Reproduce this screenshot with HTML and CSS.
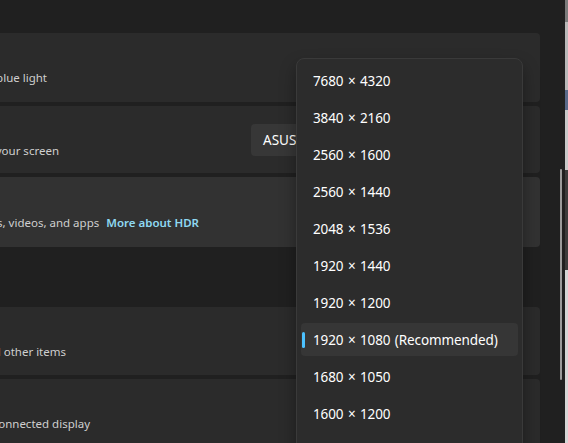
FILE: index.html
```html
<!DOCTYPE html>
<html lang="en">

<head>
    <meta charset="UTF-8">
    <meta name="viewport" content="width=device-width, initial-scale=1.0">
    <title>Display</title>
    <link rel="stylesheet" href="styles.css">
</head>

<body>
    <div class="window">
        <div class="content">
            <div class="card card-night">
                <div class="desc desc-night">
                    <span>Use warmer colors to help block blue light</span>
                </div>
                <div class="toggle"></div>
            </div>
            <div class="card card-color">
                <div class="desc desc-color">
                    <span>Adjust the way colors appear on your screen</span>
                </div>
                <div class="select">ASUS VG27A</div>
            </div>
            <div class="card card-hdr hover">
                <div class="desc desc-hdr">
                    <span>Get a brighter and more vibrant picture in games, videos, and apps</span>
                    <a class="link">More about HDR</a>
                </div>
            </div>
            <div class="section-gap"></div>
            <div class="card card-scale">
                <div class="desc desc-scale">
                    <span>Change the size of text, apps, and other items</span>
                </div>
            </div>
            <div class="card card-res">
                <div class="desc desc-res">
                    <span>Adjust the resolution to fit your connected display</span>
                </div>
            </div>
        </div>
        <div class="gutter">
            <div class="scrollbar"></div>
        </div>
        <div class="edge"></div>
    </div>

    <div class="dropdown">
        <ul>
            <li>7680 × 4320</li>
            <li>3840 × 2160</li>
            <li>2560 × 1600</li>
            <li>2560 × 1440</li>
            <li>2048 × 1536</li>
            <li>1920 × 1440</li>
            <li>1920 × 1200</li>
            <li class="selected">1920 × 1080 (Recommended)</li>
            <li>1680 × 1050</li>
            <li>1600 × 1200</li>
            <li>1600 × 900</li>
        </ul>
    </div>
</body>

</html>
```

FILE: styles.css
```css
html,
body {
    margin: 0;
    height: 100%;
    overflow: hidden;
}

body {
    background-color: #202020;
    font-family: "Noto Sans", "Open Sans", sans-serif;
    color: #ffffff;
    position: relative;
}

.window {
    display: flex;
    height: 100%;
}

.content {
    width: 540px;
    padding-top: 33px;
    display: flex;
    flex-direction: column;
    gap: 4px;
    overflow: hidden;
}

.card {
    flex: none;
    display: flex;
    align-items: center;
    margin-left: -10px;
    background-color: #2b2b2b;
    border-radius: 4px;
}

.card.hover {
    background-color: #323232;
}

.card-night {
    height: 69px;
}

.card-color {
    height: 67px;
}

.card-hdr {
    height: 70px;
}

.section-gap {
    flex: none;
    height: 52px;
}

.card-scale {
    height: 68px;
}

.card-res {
    height: 80px;
}

.desc {
    align-self: flex-start;
    margin-top: 37px;
    display: flex;
    justify-content: flex-end;
    align-items: center;
    white-space: nowrap;
    font-size: 11.5px;
    line-height: 16px;
    color: #cfcfcf;
}

.desc-night {
    width: 57px;
}

.desc-color {
    width: 69px;
}

.desc-hdr {
    width: 209px;
    margin-top: 38px;
}

.desc-scale {
    width: 76px;
}

.desc-res {
    width: 100px;
}

.link {
    margin-left: 7px;
    color: #8fd9f2;
    font-weight: 600;
}

.toggle {
    margin-left: auto;
    margin-right: 44px;
    width: 38px;
    height: 18px;
    border: 1px solid #9d9d9d;
    border-radius: 10px;
}

.select {
    margin-left: auto;
    margin-right: 20px;
    width: 269px;
    height: 32px;
    padding-left: 12px;
    box-sizing: border-box;
    display: flex;
    align-items: center;
    background-color: #373737;
    border-radius: 4px;
    font-size: 13.5px;
}

.gutter {
    width: 25px;
}

.scrollbar {
    margin-top: 169px;
    margin-left: 20px;
    width: 2px;
    height: 211px;
    background-color: #9b9b9b;
    border-radius: 1px;
}

.edge {
    flex: 1;
    background: linear-gradient(#7c7c7c 0 22px, #b9b9b9 22px 90px, #5a6a8a 90px 110px, #c9c9c9 110px 170px, #3c3c3c 170px 270px, #d6d6d6 270px);
}

.dropdown {
    position: absolute;
    left: 296px;
    top: 58px;
    width: 225px;
    height: 420px;
    padding-top: 5px;
    background-color: #2c2c2c;
    border: 1px solid #3a3a3a;
    border-radius: 8px;
    box-shadow: 0 8px 16px rgba(0, 0, 0, 0.35);
}

.dropdown ul {
    margin: 0;
    padding: 0;
    list-style-type: none;
    display: flex;
    flex-direction: column;
    gap: 4px;
}

.dropdown li {
    position: relative;
    flex: none;
    height: 33px;
    margin: 0 4px;
    padding-left: 12px;
    display: flex;
    align-items: center;
    border-radius: 4px;
    font-size: 13.5px;
    letter-spacing: -0.1px;
    word-spacing: 1px;
}

.dropdown li.selected {
    background-color: #363636;
}

.dropdown li.selected::before {
    content: "";
    position: absolute;
    left: 1px;
    top: 9px;
    width: 3px;
    height: 16px;
    border-radius: 2px;
    background-color: #4cc2ff;
}
```
